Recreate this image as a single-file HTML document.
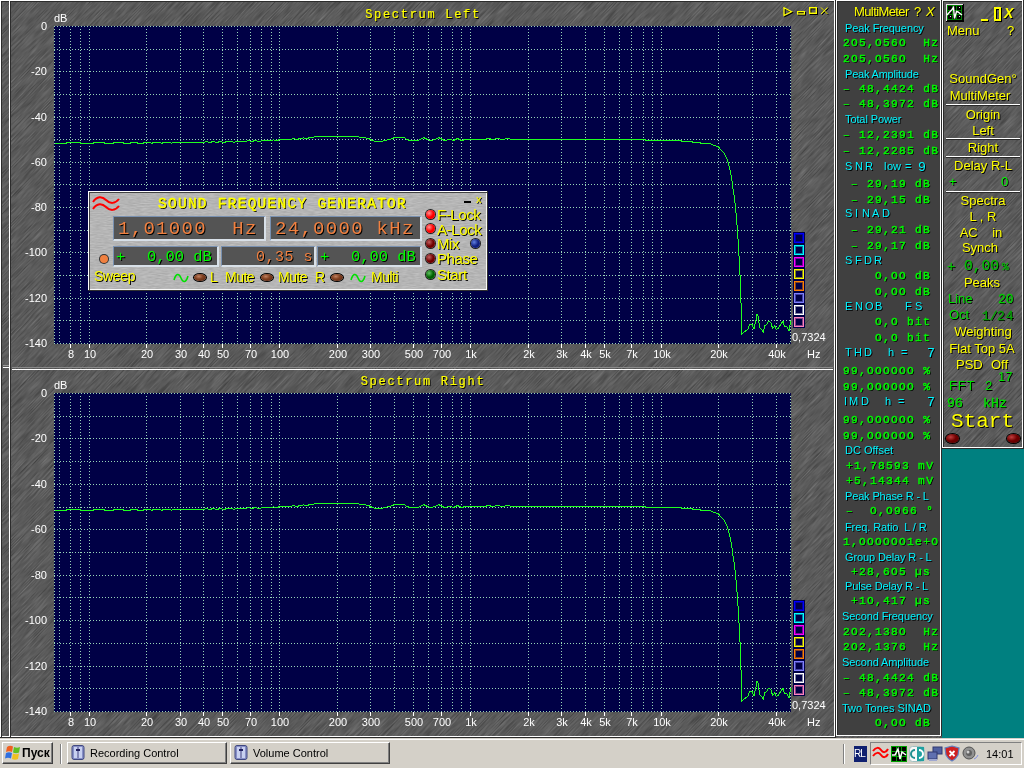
<!DOCTYPE html><html><head><meta charset="utf-8"><style>
*{margin:0;padding:0;box-sizing:border-box}
html,body{width:1024px;height:768px;overflow:hidden;background:#008080;position:relative}
body>div,body>svg{position:absolute}
.tex{background-color:#5f5f5f;
 background-image:
  repeating-linear-gradient(135deg, rgba(0,0,0,0) 0px, rgba(0,0,0,0) 17px, rgba(40,40,40,0.22) 18px, rgba(0,0,0,0) 19px),
  repeating-linear-gradient(135deg, rgba(0,0,0,0) 0px, rgba(0,0,0,0) 6px, rgba(70,70,70,0.18) 7px, rgba(0,0,0,0) 8px),
  repeating-linear-gradient(135deg, rgba(255,255,255,0) 0px, rgba(255,255,255,0) 4px, rgba(120,120,120,0.18) 5px, rgba(255,255,255,0) 6px);
}
.t{position:absolute;white-space:pre;font-family:"Liberation Sans",sans-serif;line-height:1;will-change:transform}
.s{font-family:"Liberation Sans",sans-serif;text-shadow:1px 1px 0 #000}
.m{font-family:"Liberation Mono",monospace;text-shadow:1px 1px 0 #000}
.ax{font-size:11px;color:#fff}
.mono{font-family:"Liberation Mono",monospace}
.cy{color:#00e8f0;font-size:11px;text-shadow:1px 1px 0 #000}
.gr{font-family:"Liberation Mono",monospace;color:#00ff00;font-size:13px;font-weight:bold;text-shadow:1px 1px 0 #000}
.ye{color:#ffff00;font-size:12px;text-shadow:1px 1px 0 #000}
</style></head><body><svg style="left:0;top:0" width="1024" height="738"><defs><filter id="tx" x="0" y="0" width="1" height="1" color-interpolation-filters="sRGB"><feTurbulence type="fractalNoise" baseFrequency="0.045 0.95" numOctaves="3" seed="11"/><feColorMatrix type="matrix" values="0.26 0 0 0 0.225  0.26 0 0 0 0.225  0.26 0 0 0 0.225  0 0 0 0 1"/></filter></defs><g transform="rotate(-46 512 369)"><rect x="-400" y="-500" width="1824" height="1738" filter="url(#tx)"/></g></svg><div style="left:942px;top:449px;width:82px;height:289px;background:#008080"></div><div style="position:absolute;left:0px;top:0px;width:836px;height:1px;background:#fff;"></div><div style="position:absolute;left:0px;top:1px;width:835px;height:1px;background:#2c2c2c;"></div><div style="position:absolute;left:0px;top:0px;width:1px;height:737px;background:#fff;"></div><div style="position:absolute;left:1px;top:1px;width:1px;height:736px;background:#2c2c2c;"></div><div style="position:absolute;left:9px;top:0px;width:1px;height:737px;background:#fff;"></div><div style="position:absolute;left:10px;top:1px;width:1px;height:736px;background:#2c2c2c;"></div><div style="position:absolute;left:834px;top:0px;width:1px;height:737px;background:#fff;"></div><div style="position:absolute;left:835px;top:0px;width:1px;height:738px;background:#2c2c2c;"></div><div style="position:absolute;left:2px;top:736px;width:7px;height:1px;background:#fff;"></div><div style="position:absolute;left:11px;top:736px;width:823px;height:1px;background:#fff;"></div><div style="position:absolute;left:0px;top:737px;width:836px;height:1px;background:#2c2c2c;"></div><div style="position:absolute;left:3px;top:365px;width:6px;height:1px;background:#9a9a9a;"></div><div style="position:absolute;left:3px;top:367px;width:6px;height:1px;background:#fff;"></div><div style="position:absolute;left:12px;top:367px;width:821px;height:1px;background:#8a8a8a;"></div><div style="position:absolute;left:12px;top:369px;width:821px;height:1px;background:#fff;"></div><svg style="left:54px;top:26px" width="738" height="318" viewBox="0 0 738 318" shape-rendering="crispEdges"><rect x="0" y="0" width="737" height="318" fill="#000046"/><line x1="0" y1="0.5" x2="737" y2="0.5" stroke="#98d4b8" stroke-width="1" stroke-dasharray="1 2"/><line x1="0" y1="23.5" x2="737" y2="23.5" stroke="#98d4b8" stroke-width="1" stroke-dasharray="1 2"/><line x1="0" y1="45.5" x2="737" y2="45.5" stroke="#98d4b8" stroke-width="1" stroke-dasharray="1 2"/><line x1="0" y1="68.5" x2="737" y2="68.5" stroke="#98d4b8" stroke-width="1" stroke-dasharray="1 2"/><line x1="0" y1="91.5" x2="737" y2="91.5" stroke="#98d4b8" stroke-width="1" stroke-dasharray="1 2"/><line x1="0" y1="113.5" x2="737" y2="113.5" stroke="#98d4b8" stroke-width="1" stroke-dasharray="1 2"/><line x1="0" y1="136.5" x2="737" y2="136.5" stroke="#98d4b8" stroke-width="1" stroke-dasharray="1 2"/><line x1="0" y1="158.5" x2="737" y2="158.5" stroke="#98d4b8" stroke-width="1" stroke-dasharray="1 2"/><line x1="0" y1="181.5" x2="737" y2="181.5" stroke="#98d4b8" stroke-width="1" stroke-dasharray="1 2"/><line x1="0" y1="204.5" x2="737" y2="204.5" stroke="#98d4b8" stroke-width="1" stroke-dasharray="1 2"/><line x1="0" y1="226.5" x2="737" y2="226.5" stroke="#98d4b8" stroke-width="1" stroke-dasharray="1 2"/><line x1="0" y1="249.5" x2="737" y2="249.5" stroke="#98d4b8" stroke-width="1" stroke-dasharray="1 2"/><line x1="0" y1="272.5" x2="737" y2="272.5" stroke="#98d4b8" stroke-width="1" stroke-dasharray="1 2"/><line x1="0" y1="294.5" x2="737" y2="294.5" stroke="#98d4b8" stroke-width="1" stroke-dasharray="1 2"/><line x1="0" y1="317.5" x2="737" y2="317.5" stroke="#98d4b8" stroke-width="1" stroke-dasharray="1 2"/><line x1="5.5" y1="3" x2="5.5" y2="317" stroke="#98d4b8" stroke-width="1" stroke-dasharray="1 2"/><line x1="16.5" y1="3" x2="16.5" y2="317" stroke="#98d4b8" stroke-width="1" stroke-dasharray="1 2"/><line x1="26.5" y1="3" x2="26.5" y2="317" stroke="#98d4b8" stroke-width="1" stroke-dasharray="1 2"/><line x1="35.5" y1="3" x2="35.5" y2="317" stroke="#98d4b8" stroke-width="1" stroke-dasharray="1 2"/><line x1="92.5" y1="3" x2="92.5" y2="317" stroke="#98d4b8" stroke-width="1" stroke-dasharray="1 2"/><line x1="126.5" y1="3" x2="126.5" y2="317" stroke="#98d4b8" stroke-width="1" stroke-dasharray="1 2"/><line x1="149.5" y1="3" x2="149.5" y2="317" stroke="#98d4b8" stroke-width="1" stroke-dasharray="1 2"/><line x1="168.5" y1="3" x2="168.5" y2="317" stroke="#98d4b8" stroke-width="1" stroke-dasharray="1 2"/><line x1="183.5" y1="3" x2="183.5" y2="317" stroke="#98d4b8" stroke-width="1" stroke-dasharray="1 2"/><line x1="196.5" y1="3" x2="196.5" y2="317" stroke="#98d4b8" stroke-width="1" stroke-dasharray="1 2"/><line x1="207.5" y1="3" x2="207.5" y2="317" stroke="#98d4b8" stroke-width="1" stroke-dasharray="1 2"/><line x1="217.5" y1="3" x2="217.5" y2="317" stroke="#98d4b8" stroke-width="1" stroke-dasharray="1 2"/><line x1="225.5" y1="3" x2="225.5" y2="317" stroke="#98d4b8" stroke-width="1" stroke-dasharray="1 2"/><line x1="283.5" y1="3" x2="283.5" y2="317" stroke="#98d4b8" stroke-width="1" stroke-dasharray="1 2"/><line x1="316.5" y1="3" x2="316.5" y2="317" stroke="#98d4b8" stroke-width="1" stroke-dasharray="1 2"/><line x1="340.5" y1="3" x2="340.5" y2="317" stroke="#98d4b8" stroke-width="1" stroke-dasharray="1 2"/><line x1="359.5" y1="3" x2="359.5" y2="317" stroke="#98d4b8" stroke-width="1" stroke-dasharray="1 2"/><line x1="374.5" y1="3" x2="374.5" y2="317" stroke="#98d4b8" stroke-width="1" stroke-dasharray="1 2"/><line x1="387.5" y1="3" x2="387.5" y2="317" stroke="#98d4b8" stroke-width="1" stroke-dasharray="1 2"/><line x1="398.5" y1="3" x2="398.5" y2="317" stroke="#98d4b8" stroke-width="1" stroke-dasharray="1 2"/><line x1="407.5" y1="3" x2="407.5" y2="317" stroke="#98d4b8" stroke-width="1" stroke-dasharray="1 2"/><line x1="416.5" y1="3" x2="416.5" y2="317" stroke="#98d4b8" stroke-width="1" stroke-dasharray="1 2"/><line x1="474.5" y1="3" x2="474.5" y2="317" stroke="#98d4b8" stroke-width="1" stroke-dasharray="1 2"/><line x1="507.5" y1="3" x2="507.5" y2="317" stroke="#98d4b8" stroke-width="1" stroke-dasharray="1 2"/><line x1="531.5" y1="3" x2="531.5" y2="317" stroke="#98d4b8" stroke-width="1" stroke-dasharray="1 2"/><line x1="550.5" y1="3" x2="550.5" y2="317" stroke="#98d4b8" stroke-width="1" stroke-dasharray="1 2"/><line x1="565.5" y1="3" x2="565.5" y2="317" stroke="#98d4b8" stroke-width="1" stroke-dasharray="1 2"/><line x1="577.5" y1="3" x2="577.5" y2="317" stroke="#98d4b8" stroke-width="1" stroke-dasharray="1 2"/><line x1="589.5" y1="3" x2="589.5" y2="317" stroke="#98d4b8" stroke-width="1" stroke-dasharray="1 2"/><line x1="598.5" y1="3" x2="598.5" y2="317" stroke="#98d4b8" stroke-width="1" stroke-dasharray="1 2"/><line x1="607.5" y1="3" x2="607.5" y2="317" stroke="#98d4b8" stroke-width="1" stroke-dasharray="1 2"/><line x1="664.5" y1="3" x2="664.5" y2="317" stroke="#98d4b8" stroke-width="1" stroke-dasharray="1 2"/><line x1="698.5" y1="3" x2="698.5" y2="317" stroke="#98d4b8" stroke-width="1" stroke-dasharray="1 2"/><line x1="722.5" y1="3" x2="722.5" y2="317" stroke="#98d4b8" stroke-width="1" stroke-dasharray="1 2"/><line x1="0.5" y1="3" x2="0.5" y2="317" stroke="#98d4b8" stroke-width="1" stroke-dasharray="1 2"/><line x1="736.5" y1="3" x2="736.5" y2="317" stroke="#98d4b8" stroke-width="1" stroke-dasharray="1 2"/><polyline points="0.5,117.5 12.5,117.5 12.5,116.5 26.5,116.5 26.5,117.5 39.5,117.5 39.5,116.5 50.5,116.5 50.5,117.5 59.5,117.5 59.5,116.5 69.5,116.5 69.5,117.5 76.5,117.5 76.5,116.5 83.5,116.5 83.5,117.5 89.5,117.5 89.5,116.5 96.5,116.5 97.5,117.5 99.5,116.5 106.5,116.5 107.5,117.5 109.5,116.5 116.5,116.5 117.5,117.5 118.5,116.5 149.5,116.5 152.5,115.5 155.5,116.5 159.5,115.5 162.5,116.5 166.5,115.5 169.5,116.5 173.5,115.5 180.5,116.1 183.5,115.5 191.5,115.5 194.5,114.5 197.5,115.5 201.5,114.5 204.5,115.5 209.5,114.5 216.5,114.5 219.5,114.0 222.5,114.5 226.5,113.5 236.5,113.5 239.5,112.5 242.5,113.5 246.5,112.5 249.5,112.0 252.5,112.5 256.5,111.5 263.5,110.5 301.5,110.5 308.5,111.5 314.5,112.5 318.5,114.5 321.5,115.5 326.5,115.5 331.5,114.5 338.5,112.5 340.5,111.5 350.5,111.5 352.5,113.5 356.5,114.5 363.5,114.5 366.5,113.5 369.5,111.5 373.5,113.5 376.5,114.5 381.5,113.5 384.5,111.5 388.5,113.5 390.5,114.5 396.5,113.5 399.5,114.5 403.5,112.5 407.5,114.5 411.5,113.5 416.5,113.5 421.5,113.5 424.5,113.5 430.5,113.5 434.5,112.5 438.5,113.5 443.5,112.5 448.5,113.5 453.5,112.5 458.5,113.5 591.5,113.5 591.5,114.5 627.5,114.5 627.5,115.5 638.5,115.5 638.5,116.5 646.5,116.5 646.5,117.5 656.5,117.5 658.1,118.5 660.5,119.5 664.1,120.5 666.3,123.1 669.7,126.5 671.4,130.0 673.1,133.4 674.4,136.9 675.7,142.9 677.0,148.9 678.3,156.6 679.1,163.5 680.4,171.2 682.0,187.1 683.5,204.5 684.7,224.0 685.9,245.1 686.8,271.5 687.7,296.0 688.0,308.0 689.1,306.9 694.0,303.1 695.6,298.7 697.8,298.2 698.9,300.4 700.0,303.1 701.1,297.1 702.2,293.2 703.0,288.1 704.1,290.0 704.9,296.5 706.0,302.0 707.7,303.6 709.3,305.8 710.9,299.8 712.6,298.7 714.2,295.4 716.9,296.5 718.6,302.5 720.8,299.8 722.4,303.6 724.1,302.5 729.0,294.9 730.6,300.9 732.8,300.4 735.0,305.3 736.6,295.5" fill="none" stroke="#20ff20" stroke-width="1" shape-rendering="crispEdges"/></svg><div class="t ax" style="right:977px;top:21px">0</div><div class="t ax" style="right:977px;top:66px">-20</div><div class="t ax" style="right:977px;top:112px">-40</div><div class="t ax" style="right:977px;top:157px">-60</div><div class="t ax" style="right:977px;top:202px">-80</div><div class="t ax" style="right:977px;top:247px">-100</div><div class="t ax" style="right:977px;top:293px">-120</div><div class="t ax" style="right:977px;top:338px">-140</div><div class="t ax" style="left:54px;top:13px">dB</div><div style="position:absolute;left:70px;top:344px;width:1px;height:4px;background:#fff;"></div><div class="t ax" style="left:41px;width:60px;text-align:center;top:349px">8</div><div style="position:absolute;left:89px;top:344px;width:1px;height:4px;background:#fff;"></div><div class="t ax" style="left:60px;width:60px;text-align:center;top:349px">10</div><div style="position:absolute;left:146px;top:344px;width:1px;height:4px;background:#fff;"></div><div class="t ax" style="left:117px;width:60px;text-align:center;top:349px">20</div><div style="position:absolute;left:180px;top:344px;width:1px;height:4px;background:#fff;"></div><div class="t ax" style="left:151px;width:60px;text-align:center;top:349px">30</div><div style="position:absolute;left:203px;top:344px;width:1px;height:4px;background:#fff;"></div><div class="t ax" style="left:174px;width:60px;text-align:center;top:349px">40</div><div style="position:absolute;left:222px;top:344px;width:1px;height:4px;background:#fff;"></div><div class="t ax" style="left:193px;width:60px;text-align:center;top:349px">50</div><div style="position:absolute;left:250px;top:344px;width:1px;height:4px;background:#fff;"></div><div class="t ax" style="left:221px;width:60px;text-align:center;top:349px">70</div><div style="position:absolute;left:279px;top:344px;width:1px;height:4px;background:#fff;"></div><div class="t ax" style="left:250px;width:60px;text-align:center;top:349px">100</div><div style="position:absolute;left:337px;top:344px;width:1px;height:4px;background:#fff;"></div><div class="t ax" style="left:308px;width:60px;text-align:center;top:349px">200</div><div style="position:absolute;left:370px;top:344px;width:1px;height:4px;background:#fff;"></div><div class="t ax" style="left:341px;width:60px;text-align:center;top:349px">300</div><div style="position:absolute;left:413px;top:344px;width:1px;height:4px;background:#fff;"></div><div class="t ax" style="left:384px;width:60px;text-align:center;top:349px">500</div><div style="position:absolute;left:441px;top:344px;width:1px;height:4px;background:#fff;"></div><div class="t ax" style="left:412px;width:60px;text-align:center;top:349px">700</div><div style="position:absolute;left:470px;top:344px;width:1px;height:4px;background:#fff;"></div><div class="t ax" style="left:441px;width:60px;text-align:center;top:349px">1k</div><div style="position:absolute;left:528px;top:344px;width:1px;height:4px;background:#fff;"></div><div class="t ax" style="left:499px;width:60px;text-align:center;top:349px">2k</div><div style="position:absolute;left:561px;top:344px;width:1px;height:4px;background:#fff;"></div><div class="t ax" style="left:532px;width:60px;text-align:center;top:349px">3k</div><div style="position:absolute;left:585px;top:344px;width:1px;height:4px;background:#fff;"></div><div class="t ax" style="left:556px;width:60px;text-align:center;top:349px">4k</div><div style="position:absolute;left:604px;top:344px;width:1px;height:4px;background:#fff;"></div><div class="t ax" style="left:575px;width:60px;text-align:center;top:349px">5k</div><div style="position:absolute;left:631px;top:344px;width:1px;height:4px;background:#fff;"></div><div class="t ax" style="left:602px;width:60px;text-align:center;top:349px">7k</div><div style="position:absolute;left:661px;top:344px;width:1px;height:4px;background:#fff;"></div><div class="t ax" style="left:632px;width:60px;text-align:center;top:349px">10k</div><div style="position:absolute;left:718px;top:344px;width:1px;height:4px;background:#fff;"></div><div class="t ax" style="left:689px;width:60px;text-align:center;top:349px">20k</div><div style="position:absolute;left:776px;top:344px;width:1px;height:4px;background:#fff;"></div><div class="t ax" style="left:747px;width:60px;text-align:center;top:349px">40k</div><div class="t ax" style="left:807px;top:349px">Hz</div><div class="t ax" style="left:792px;top:332px">0,7324</div><div class="t mono" style="left:0;width:846px;text-align:center;top:9.28px;font-size:12px;letter-spacing:1.7px;-webkit-text-stroke:0.2px #ffff00;color:#ffff00;text-shadow:1px 1px 0 #000">Spectrum Left</div><div style="position:absolute;left:793px;top:232px;width:12px;height:96px;background:#000046;"></div><div style="left:794px;top:233px;width:10px;height:10px;background:#000046;border:1px solid #0000ff;box-shadow:inset 0 0 0 1px #0000ff80"></div><div style="left:794px;top:245px;width:10px;height:10px;background:#000046;border:1px solid #00ffff;box-shadow:inset 0 0 0 1px #00ffff80"></div><div style="left:794px;top:257px;width:10px;height:10px;background:#000046;border:1px solid #ff00ff;box-shadow:inset 0 0 0 1px #ff00ff80"></div><div style="left:794px;top:269px;width:10px;height:10px;background:#000046;border:1px solid #ffff00;box-shadow:inset 0 0 0 1px #ffff0080"></div><div style="left:794px;top:281px;width:10px;height:10px;background:#000046;border:1px solid #ff8000;box-shadow:inset 0 0 0 1px #ff800080"></div><div style="left:794px;top:293px;width:10px;height:10px;background:#000046;border:1px solid #8080ff;box-shadow:inset 0 0 0 1px #8080ff80"></div><div style="left:794px;top:305px;width:10px;height:10px;background:#000046;border:1px solid #ffffff;box-shadow:inset 0 0 0 1px #ffffff80"></div><div style="left:794px;top:317px;width:10px;height:10px;background:#000046;border:1px solid #ff80c0;box-shadow:inset 0 0 0 1px #ff80c080"></div><svg style="left:782px;top:6px" width="50" height="14" viewBox="0 0 50 14"><polygon points="3,2.8 10.5,6.8 3,10.5" fill="none" stroke="#000" stroke-width="1.3" stroke-linejoin="miter"/><rect x="16.6" y="6.6" width="6.8" height="2.4" fill="none" stroke="#000" stroke-width="1.2"/><rect x="28.7" y="2.7" width="6.6" height="5.6" fill="none" stroke="#000" stroke-width="1.4"/><path d="M40,2.5 L46.5,9 M46.5,2.5 L40,9" stroke="#000" stroke-width="1"/><polygon points="2,1.8 9.5,5.8 2,9.5" fill="none" stroke="#ffff00" stroke-width="1.3" stroke-linejoin="miter"/><rect x="15.6" y="5.6" width="6.8" height="2.4" fill="none" stroke="#ffff00" stroke-width="1.2"/><rect x="27.7" y="1.7" width="6.6" height="5.6" fill="none" stroke="#ffff00" stroke-width="1.4"/><path d="M39,1.5 L45.5,8 M45.5,1.5 L39,8" stroke="#ffff00" stroke-width="1"/></svg><svg style="left:54px;top:393px" width="738" height="319" viewBox="0 0 738 319" shape-rendering="crispEdges"><rect x="0" y="0" width="737" height="319" fill="#000046"/><line x1="0" y1="0.5" x2="737" y2="0.5" stroke="#98d4b8" stroke-width="1" stroke-dasharray="1 2"/><line x1="0" y1="23.5" x2="737" y2="23.5" stroke="#98d4b8" stroke-width="1" stroke-dasharray="1 2"/><line x1="0" y1="45.5" x2="737" y2="45.5" stroke="#98d4b8" stroke-width="1" stroke-dasharray="1 2"/><line x1="0" y1="68.5" x2="737" y2="68.5" stroke="#98d4b8" stroke-width="1" stroke-dasharray="1 2"/><line x1="0" y1="91.5" x2="737" y2="91.5" stroke="#98d4b8" stroke-width="1" stroke-dasharray="1 2"/><line x1="0" y1="114.5" x2="737" y2="114.5" stroke="#98d4b8" stroke-width="1" stroke-dasharray="1 2"/><line x1="0" y1="136.5" x2="737" y2="136.5" stroke="#98d4b8" stroke-width="1" stroke-dasharray="1 2"/><line x1="0" y1="159.5" x2="737" y2="159.5" stroke="#98d4b8" stroke-width="1" stroke-dasharray="1 2"/><line x1="0" y1="182.5" x2="737" y2="182.5" stroke="#98d4b8" stroke-width="1" stroke-dasharray="1 2"/><line x1="0" y1="204.5" x2="737" y2="204.5" stroke="#98d4b8" stroke-width="1" stroke-dasharray="1 2"/><line x1="0" y1="227.5" x2="737" y2="227.5" stroke="#98d4b8" stroke-width="1" stroke-dasharray="1 2"/><line x1="0" y1="250.5" x2="737" y2="250.5" stroke="#98d4b8" stroke-width="1" stroke-dasharray="1 2"/><line x1="0" y1="273.5" x2="737" y2="273.5" stroke="#98d4b8" stroke-width="1" stroke-dasharray="1 2"/><line x1="0" y1="295.5" x2="737" y2="295.5" stroke="#98d4b8" stroke-width="1" stroke-dasharray="1 2"/><line x1="0" y1="318.5" x2="737" y2="318.5" stroke="#98d4b8" stroke-width="1" stroke-dasharray="1 2"/><line x1="5.5" y1="3" x2="5.5" y2="318" stroke="#98d4b8" stroke-width="1" stroke-dasharray="1 2"/><line x1="16.5" y1="3" x2="16.5" y2="318" stroke="#98d4b8" stroke-width="1" stroke-dasharray="1 2"/><line x1="26.5" y1="3" x2="26.5" y2="318" stroke="#98d4b8" stroke-width="1" stroke-dasharray="1 2"/><line x1="35.5" y1="3" x2="35.5" y2="318" stroke="#98d4b8" stroke-width="1" stroke-dasharray="1 2"/><line x1="92.5" y1="3" x2="92.5" y2="318" stroke="#98d4b8" stroke-width="1" stroke-dasharray="1 2"/><line x1="126.5" y1="3" x2="126.5" y2="318" stroke="#98d4b8" stroke-width="1" stroke-dasharray="1 2"/><line x1="149.5" y1="3" x2="149.5" y2="318" stroke="#98d4b8" stroke-width="1" stroke-dasharray="1 2"/><line x1="168.5" y1="3" x2="168.5" y2="318" stroke="#98d4b8" stroke-width="1" stroke-dasharray="1 2"/><line x1="183.5" y1="3" x2="183.5" y2="318" stroke="#98d4b8" stroke-width="1" stroke-dasharray="1 2"/><line x1="196.5" y1="3" x2="196.5" y2="318" stroke="#98d4b8" stroke-width="1" stroke-dasharray="1 2"/><line x1="207.5" y1="3" x2="207.5" y2="318" stroke="#98d4b8" stroke-width="1" stroke-dasharray="1 2"/><line x1="217.5" y1="3" x2="217.5" y2="318" stroke="#98d4b8" stroke-width="1" stroke-dasharray="1 2"/><line x1="225.5" y1="3" x2="225.5" y2="318" stroke="#98d4b8" stroke-width="1" stroke-dasharray="1 2"/><line x1="283.5" y1="3" x2="283.5" y2="318" stroke="#98d4b8" stroke-width="1" stroke-dasharray="1 2"/><line x1="316.5" y1="3" x2="316.5" y2="318" stroke="#98d4b8" stroke-width="1" stroke-dasharray="1 2"/><line x1="340.5" y1="3" x2="340.5" y2="318" stroke="#98d4b8" stroke-width="1" stroke-dasharray="1 2"/><line x1="359.5" y1="3" x2="359.5" y2="318" stroke="#98d4b8" stroke-width="1" stroke-dasharray="1 2"/><line x1="374.5" y1="3" x2="374.5" y2="318" stroke="#98d4b8" stroke-width="1" stroke-dasharray="1 2"/><line x1="387.5" y1="3" x2="387.5" y2="318" stroke="#98d4b8" stroke-width="1" stroke-dasharray="1 2"/><line x1="398.5" y1="3" x2="398.5" y2="318" stroke="#98d4b8" stroke-width="1" stroke-dasharray="1 2"/><line x1="407.5" y1="3" x2="407.5" y2="318" stroke="#98d4b8" stroke-width="1" stroke-dasharray="1 2"/><line x1="416.5" y1="3" x2="416.5" y2="318" stroke="#98d4b8" stroke-width="1" stroke-dasharray="1 2"/><line x1="474.5" y1="3" x2="474.5" y2="318" stroke="#98d4b8" stroke-width="1" stroke-dasharray="1 2"/><line x1="507.5" y1="3" x2="507.5" y2="318" stroke="#98d4b8" stroke-width="1" stroke-dasharray="1 2"/><line x1="531.5" y1="3" x2="531.5" y2="318" stroke="#98d4b8" stroke-width="1" stroke-dasharray="1 2"/><line x1="550.5" y1="3" x2="550.5" y2="318" stroke="#98d4b8" stroke-width="1" stroke-dasharray="1 2"/><line x1="565.5" y1="3" x2="565.5" y2="318" stroke="#98d4b8" stroke-width="1" stroke-dasharray="1 2"/><line x1="577.5" y1="3" x2="577.5" y2="318" stroke="#98d4b8" stroke-width="1" stroke-dasharray="1 2"/><line x1="589.5" y1="3" x2="589.5" y2="318" stroke="#98d4b8" stroke-width="1" stroke-dasharray="1 2"/><line x1="598.5" y1="3" x2="598.5" y2="318" stroke="#98d4b8" stroke-width="1" stroke-dasharray="1 2"/><line x1="607.5" y1="3" x2="607.5" y2="318" stroke="#98d4b8" stroke-width="1" stroke-dasharray="1 2"/><line x1="664.5" y1="3" x2="664.5" y2="318" stroke="#98d4b8" stroke-width="1" stroke-dasharray="1 2"/><line x1="698.5" y1="3" x2="698.5" y2="318" stroke="#98d4b8" stroke-width="1" stroke-dasharray="1 2"/><line x1="722.5" y1="3" x2="722.5" y2="318" stroke="#98d4b8" stroke-width="1" stroke-dasharray="1 2"/><line x1="0.5" y1="3" x2="0.5" y2="318" stroke="#98d4b8" stroke-width="1" stroke-dasharray="1 2"/><line x1="736.5" y1="3" x2="736.5" y2="318" stroke="#98d4b8" stroke-width="1" stroke-dasharray="1 2"/><polyline points="0.5,117.5 12.5,117.5 12.5,116.5 26.5,116.5 26.5,117.5 39.5,117.5 39.5,116.5 50.5,116.5 50.5,117.5 59.5,117.5 59.5,116.5 69.5,116.5 69.5,117.5 76.5,117.5 76.5,116.5 83.5,116.5 83.5,117.5 89.5,117.5 89.5,116.5 96.5,116.5 97.5,117.5 99.5,116.5 106.5,116.5 107.5,117.5 109.5,116.5 116.5,116.5 117.5,117.5 118.5,116.5 149.5,116.5 152.5,115.5 155.5,116.5 159.5,115.5 162.5,116.5 166.5,115.5 169.5,116.5 173.5,115.5 180.5,116.1 183.5,115.5 191.5,115.5 194.5,114.5 197.5,115.5 201.5,114.5 204.5,115.5 209.5,114.5 216.5,114.5 219.5,114.0 222.5,114.5 226.5,113.5 236.5,113.5 239.5,112.5 242.5,113.5 246.5,112.5 249.5,112.0 252.5,112.5 256.5,111.5 263.5,110.5 301.5,110.5 308.5,111.5 314.5,112.5 318.5,114.5 321.5,115.5 326.5,115.5 331.5,114.5 338.5,112.5 340.5,111.5 350.5,111.5 352.5,113.5 356.5,114.5 363.5,114.5 366.5,113.5 369.5,111.5 373.5,113.5 376.5,114.5 381.5,113.5 384.5,111.5 388.5,113.5 390.5,114.5 396.5,113.5 399.5,114.5 403.5,112.5 407.5,114.5 411.5,113.5 416.5,113.5 421.5,113.5 424.5,113.5 430.5,113.5 434.5,112.5 438.5,113.5 443.5,112.5 448.5,113.5 453.5,112.5 458.5,113.5 591.5,113.5 591.5,114.5 627.5,114.5 627.5,115.5 638.5,115.5 638.5,116.5 646.5,116.5 646.5,117.5 656.5,117.5 658.1,118.5 660.5,119.5 664.1,120.5 666.3,123.1 669.7,126.5 671.4,130.0 673.1,133.4 674.4,136.9 675.7,142.9 677.0,148.9 678.3,156.6 679.1,163.5 680.4,171.2 682.0,187.1 683.5,204.5 684.7,224.0 685.9,245.1 686.8,271.5 687.7,296.0 688.0,308.0 689.1,306.9 694.0,303.1 695.6,298.7 697.8,298.2 698.9,300.4 700.0,303.1 701.1,297.1 702.2,293.2 703.0,288.1 704.1,290.0 704.9,296.5 706.0,302.0 707.7,303.6 709.3,305.8 710.9,299.8 712.6,298.7 714.2,295.4 716.9,296.5 718.6,302.5 720.8,299.8 722.4,303.6 724.1,302.5 729.0,294.9 730.6,300.9 732.8,300.4 735.0,305.3 736.6,295.5" fill="none" stroke="#20ff20" stroke-width="1" shape-rendering="crispEdges"/></svg><div class="t ax" style="right:977px;top:388px">0</div><div class="t ax" style="right:977px;top:433px">-20</div><div class="t ax" style="right:977px;top:479px">-40</div><div class="t ax" style="right:977px;top:524px">-60</div><div class="t ax" style="right:977px;top:570px">-80</div><div class="t ax" style="right:977px;top:615px">-100</div><div class="t ax" style="right:977px;top:661px">-120</div><div class="t ax" style="right:977px;top:706px">-140</div><div class="t ax" style="left:54px;top:380px">dB</div><div style="position:absolute;left:70px;top:712px;width:1px;height:4px;background:#fff;"></div><div class="t ax" style="left:41px;width:60px;text-align:center;top:717px">8</div><div style="position:absolute;left:89px;top:712px;width:1px;height:4px;background:#fff;"></div><div class="t ax" style="left:60px;width:60px;text-align:center;top:717px">10</div><div style="position:absolute;left:146px;top:712px;width:1px;height:4px;background:#fff;"></div><div class="t ax" style="left:117px;width:60px;text-align:center;top:717px">20</div><div style="position:absolute;left:180px;top:712px;width:1px;height:4px;background:#fff;"></div><div class="t ax" style="left:151px;width:60px;text-align:center;top:717px">30</div><div style="position:absolute;left:203px;top:712px;width:1px;height:4px;background:#fff;"></div><div class="t ax" style="left:174px;width:60px;text-align:center;top:717px">40</div><div style="position:absolute;left:222px;top:712px;width:1px;height:4px;background:#fff;"></div><div class="t ax" style="left:193px;width:60px;text-align:center;top:717px">50</div><div style="position:absolute;left:250px;top:712px;width:1px;height:4px;background:#fff;"></div><div class="t ax" style="left:221px;width:60px;text-align:center;top:717px">70</div><div style="position:absolute;left:279px;top:712px;width:1px;height:4px;background:#fff;"></div><div class="t ax" style="left:250px;width:60px;text-align:center;top:717px">100</div><div style="position:absolute;left:337px;top:712px;width:1px;height:4px;background:#fff;"></div><div class="t ax" style="left:308px;width:60px;text-align:center;top:717px">200</div><div style="position:absolute;left:370px;top:712px;width:1px;height:4px;background:#fff;"></div><div class="t ax" style="left:341px;width:60px;text-align:center;top:717px">300</div><div style="position:absolute;left:413px;top:712px;width:1px;height:4px;background:#fff;"></div><div class="t ax" style="left:384px;width:60px;text-align:center;top:717px">500</div><div style="position:absolute;left:441px;top:712px;width:1px;height:4px;background:#fff;"></div><div class="t ax" style="left:412px;width:60px;text-align:center;top:717px">700</div><div style="position:absolute;left:470px;top:712px;width:1px;height:4px;background:#fff;"></div><div class="t ax" style="left:441px;width:60px;text-align:center;top:717px">1k</div><div style="position:absolute;left:528px;top:712px;width:1px;height:4px;background:#fff;"></div><div class="t ax" style="left:499px;width:60px;text-align:center;top:717px">2k</div><div style="position:absolute;left:561px;top:712px;width:1px;height:4px;background:#fff;"></div><div class="t ax" style="left:532px;width:60px;text-align:center;top:717px">3k</div><div style="position:absolute;left:585px;top:712px;width:1px;height:4px;background:#fff;"></div><div class="t ax" style="left:556px;width:60px;text-align:center;top:717px">4k</div><div style="position:absolute;left:604px;top:712px;width:1px;height:4px;background:#fff;"></div><div class="t ax" style="left:575px;width:60px;text-align:center;top:717px">5k</div><div style="position:absolute;left:631px;top:712px;width:1px;height:4px;background:#fff;"></div><div class="t ax" style="left:602px;width:60px;text-align:center;top:717px">7k</div><div style="position:absolute;left:661px;top:712px;width:1px;height:4px;background:#fff;"></div><div class="t ax" style="left:632px;width:60px;text-align:center;top:717px">10k</div><div style="position:absolute;left:718px;top:712px;width:1px;height:4px;background:#fff;"></div><div class="t ax" style="left:689px;width:60px;text-align:center;top:717px">20k</div><div style="position:absolute;left:776px;top:712px;width:1px;height:4px;background:#fff;"></div><div class="t ax" style="left:747px;width:60px;text-align:center;top:717px">40k</div><div class="t ax" style="left:807px;top:717px">Hz</div><div class="t ax" style="left:792px;top:700px">0,7324</div><div class="t mono" style="left:0;width:846px;text-align:center;top:376.28px;font-size:12px;letter-spacing:1.7px;-webkit-text-stroke:0.2px #ffff00;color:#ffff00;text-shadow:1px 1px 0 #000">Spectrum Right</div><div style="position:absolute;left:793px;top:600px;width:12px;height:96px;background:#000046;"></div><div style="left:794px;top:601px;width:10px;height:10px;background:#000046;border:1px solid #0000ff;box-shadow:inset 0 0 0 1px #0000ff80"></div><div style="left:794px;top:613px;width:10px;height:10px;background:#000046;border:1px solid #00ffff;box-shadow:inset 0 0 0 1px #00ffff80"></div><div style="left:794px;top:625px;width:10px;height:10px;background:#000046;border:1px solid #ff00ff;box-shadow:inset 0 0 0 1px #ff00ff80"></div><div style="left:794px;top:637px;width:10px;height:10px;background:#000046;border:1px solid #ffff00;box-shadow:inset 0 0 0 1px #ffff0080"></div><div style="left:794px;top:649px;width:10px;height:10px;background:#000046;border:1px solid #ff8000;box-shadow:inset 0 0 0 1px #ff800080"></div><div style="left:794px;top:661px;width:10px;height:10px;background:#000046;border:1px solid #8080ff;box-shadow:inset 0 0 0 1px #8080ff80"></div><div style="left:794px;top:673px;width:10px;height:10px;background:#000046;border:1px solid #ffffff;box-shadow:inset 0 0 0 1px #ffffff80"></div><div style="left:794px;top:685px;width:10px;height:10px;background:#000046;border:1px solid #ff80c0;box-shadow:inset 0 0 0 1px #ff80c080"></div><div style="position:absolute;left:836px;top:0px;width:1px;height:736px;background:#fff;"></div><div style="position:absolute;left:837px;top:1px;width:1px;height:735px;background:#2c2c2c;"></div><div style="position:absolute;left:836px;top:0px;width:106px;height:1px;background:#fff;"></div><div style="position:absolute;left:837px;top:1px;width:103px;height:1px;background:#2c2c2c;"></div><div style="position:absolute;left:838px;top:2px;width:102px;height:733px;background:#404040;"></div><div style="position:absolute;left:940px;top:0px;width:1px;height:736px;background:#fff;"></div><div style="position:absolute;left:941px;top:0px;width:1px;height:736px;background:#2c2c2c;"></div><div style="position:absolute;left:837px;top:735px;width:104px;height:1px;background:#fff;"></div><div style="position:absolute;left:942px;top:0px;width:82px;height:1px;background:#fff;"></div><div style="position:absolute;left:943px;top:1px;width:79px;height:1px;background:#2c2c2c;"></div><div style="position:absolute;left:942px;top:0px;width:1px;height:448px;background:#fff;"></div><div style="position:absolute;left:943px;top:1px;width:1px;height:447px;background:#2c2c2c;"></div><div style="position:absolute;left:1022px;top:0px;width:1px;height:448px;background:#fff;"></div><div style="position:absolute;left:1023px;top:0px;width:1px;height:449px;background:#2c2c2c;"></div><div style="position:absolute;left:943px;top:447px;width:80px;height:1px;background:#fff;"></div><div style="position:absolute;left:942px;top:448px;width:82px;height:1px;background:#2c2c2c;"></div><svg style="left:88px;top:191px" width="400" height="100" shape-rendering="crispEdges"><defs><filter id="brush" x="0" y="0" width="1" height="1" color-interpolation-filters="sRGB"><feTurbulence type="fractalNoise" baseFrequency="0.15 0.9" numOctaves="2" seed="5"/><feColorMatrix type="matrix" values="0.14 0 0 0 0.64  0.14 0 0 0 0.64  0.14 0 0 0 0.64  0 0 0 0 1"/></filter></defs><rect x="0" y="0" width="400" height="100" filter="url(#brush)"/><rect x="0" y="0" width="400" height="1" fill="#fff"/><rect x="0" y="0" width="1" height="100" fill="#fff"/><rect x="0" y="99" width="400" height="1" fill="#303030"/><rect x="399" y="0" width="1" height="100" fill="#303030"/><rect x="1" y="1" width="398" height="1" fill="#404040"/><rect x="1" y="1" width="1" height="98" fill="#404040"/><rect x="2" y="98" width="397" height="1" fill="#f8f8f8"/><rect x="398" y="2" width="1" height="97" fill="#f8f8f8"/></svg><svg style="left:92px;top:195px" width="30" height="20" viewBox="0 0 30 20"><path d="M1,7 C5,1 10,1 14,5 C18,9 23,9 27,4" fill="none" stroke="#ff0000" stroke-width="2"/><path d="M1,14 C5,8 10,8 14,12 C18,16 23,16 27,11" fill="none" stroke="#ff0000" stroke-width="2"/></svg><div class="t m" style="left:158px;top:197.48px;font-size:14.5px;letter-spacing:1.26px;font-weight:normal;-webkit-text-stroke:0.5px #ffff00;color:#ffff00;text-shadow:1px 1px 0 #000">SOUND FREQUENCY GENERATOR</div><div style="left:113px;top:216px;width:153px;height:25px;background:#545454;border-top:1px solid #7890b0;border-left:1px solid #7890b0;border-right:2px solid #d8e0e8;border-bottom:2px solid #d8e0e8"></div><div style="left:270px;top:216px;width:152px;height:25px;background:#545454;border-top:1px solid #7890b0;border-left:1px solid #7890b0;border-right:2px solid #d8e0e8;border-bottom:2px solid #d8e0e8"></div><div style="left:113px;top:246px;width:106px;height:21px;background:#545454;border-top:1px solid #7890b0;border-left:1px solid #7890b0;border-right:2px solid #d8e0e8;border-bottom:2px solid #d8e0e8"></div><div style="left:221px;top:246px;width:95px;height:21px;background:#545454;border-top:1px solid #7890b0;border-left:1px solid #7890b0;border-right:2px solid #d8e0e8;border-bottom:2px solid #d8e0e8"></div><div style="left:317px;top:246px;width:105px;height:21px;background:#545454;border-top:1px solid #7890b0;border-left:1px solid #7890b0;border-right:2px solid #d8e0e8;border-bottom:2px solid #d8e0e8"></div><div class="t m" style="left:118px;top:220.06px;font-size:19px;font-weight:normal;color:#f08040;text-shadow:1px 1px 0 #000;letter-spacing:1.3px">1,01000  Hz</div><div class="t m" style="left:275px;top:220.06px;font-size:19px;font-weight:normal;color:#f08040;text-shadow:1px 1px 0 #000;letter-spacing:1.3px">24,0000 kHz</div><div class="t m" style="left:116px;top:249.80px;font-size:15.4px;font-weight:normal;color:#00ff00;text-shadow:1px 1px 0 #000;">+</div><div class="t m" style="left:147px;top:249.80px;font-size:15.4px;font-weight:normal;color:#00ff00;text-shadow:1px 1px 0 #000;">0,00 dB</div><div class="t m" style="left:256px;top:250.10px;font-size:15px;font-weight:normal;color:#f08040;text-shadow:1px 1px 0 #000;letter-spacing:0.5px">0,35 s</div><div class="t m" style="left:320px;top:249.80px;font-size:15.4px;font-weight:normal;color:#00ff00;text-shadow:1px 1px 0 #000;">+</div><div class="t m" style="left:351px;top:249.80px;font-size:15.4px;font-weight:normal;color:#00ff00;text-shadow:1px 1px 0 #000;">0,00 dB</div><div style="left:100px;top:255px;width:8px;height:8px;border-radius:50%;background:#f08040;box-shadow:0 0 0 1px #303030"></div><div class="t s" style="left:94px;top:269.10px;font-size:14px;color:#ffff00;text-shadow:1px 1px 0 #000;letter-spacing:-0.3px">Sweep</div><svg style="left:173px;top:272px" width="16" height="12" viewBox="0 0 16 12"><path d="M1,8 C3,1 6,1 8,6 C10,11 13,11 15,4" fill="none" stroke="#00e000" stroke-width="1.6"/></svg><div style="left:194px;top:274px;width:12px;height:7px;border-radius:50%;background:radial-gradient(ellipse at 40% 35%,#c08060 0,#804020 40%,#502010 100%);box-shadow:0 0 0 1px #000"></div><div class="t s" style="left:210px;top:270.10px;font-size:14px;color:#ffff00;text-shadow:1px 1px 0 #000;">L</div><div class="t s" style="left:225px;top:270.10px;font-size:14px;color:#ffff00;text-shadow:1px 1px 0 #000;letter-spacing:-0.5px">Mute</div><div style="left:261px;top:274px;width:12px;height:7px;border-radius:50%;background:radial-gradient(ellipse at 40% 35%,#c08060 0,#804020 40%,#502010 100%);box-shadow:0 0 0 1px #000"></div><div class="t s" style="left:278px;top:270.10px;font-size:14px;color:#ffff00;text-shadow:1px 1px 0 #000;letter-spacing:-0.5px">Mute</div><div class="t s" style="left:315px;top:270.10px;font-size:14px;color:#ffff00;text-shadow:1px 1px 0 #000;">R</div><div style="left:331px;top:274px;width:12px;height:7px;border-radius:50%;background:radial-gradient(ellipse at 40% 35%,#c08060 0,#804020 40%,#502010 100%);box-shadow:0 0 0 1px #000"></div><svg style="left:350px;top:272px" width="16" height="12" viewBox="0 0 16 12"><path d="M1,8 C3,1 6,1 8,6 C10,11 13,11 15,4" fill="none" stroke="#00e000" stroke-width="1.6"/></svg><div class="t s" style="left:371px;top:270.10px;font-size:14px;color:#ffff00;text-shadow:1px 1px 0 #000;letter-spacing:-0.5px">Multi</div><div style="left:425.5px;top:209.5px;width:9px;height:9px;border-radius:50%;background:radial-gradient(circle at 35% 35%,#ff9090 0,#ff0000 50%);box-shadow:0 0 0 1px #202020"></div><div style="left:425.5px;top:224.1px;width:9px;height:9px;border-radius:50%;background:radial-gradient(circle at 35% 35%,#ff9090 0,#ff0000 50%);box-shadow:0 0 0 1px #202020"></div><div style="left:425.5px;top:239.0px;width:9px;height:9px;border-radius:50%;background:radial-gradient(circle at 35% 35%,#c06060 0,#700000 50%);box-shadow:0 0 0 1px #202020"></div><div style="left:425.5px;top:253.89999999999998px;width:9px;height:9px;border-radius:50%;background:radial-gradient(circle at 35% 35%,#c06060 0,#700000 50%);box-shadow:0 0 0 1px #202020"></div><div style="left:425.5px;top:270.2px;width:9px;height:9px;border-radius:50%;background:radial-gradient(circle at 35% 35%,#60c060 0,#006000 50%);box-shadow:0 0 0 1px #202020"></div><div style="left:470.5px;top:239.0px;width:9px;height:9px;border-radius:50%;background:radial-gradient(circle at 35% 35%,#6080e0 0,#102080 50%);box-shadow:0 0 0 1px #202020"></div><div class="t s" style="left:437px;top:207.05px;font-size:15px;color:#ffff00;text-shadow:1px 1px 0 #000;letter-spacing:-0.4px">F-Lock</div><div class="t s" style="left:437px;top:221.65px;font-size:15px;color:#ffff00;text-shadow:1px 1px 0 #000;letter-spacing:-0.4px">A-Lock</div><div class="t s" style="left:437px;top:236.45px;font-size:15px;color:#ffff00;text-shadow:1px 1px 0 #000;letter-spacing:-0.4px">Mix</div><div class="t s" style="left:437px;top:251.35px;font-size:15px;color:#ffff00;text-shadow:1px 1px 0 #000;letter-spacing:-0.4px">Phase</div><div class="t s" style="left:437px;top:266.85px;font-size:15px;color:#ffff00;text-shadow:1px 1px 0 #000;letter-spacing:-0.4px">Start</div><div style="position:absolute;left:464px;top:201px;width:7px;height:2px;background:#000;"></div><div class="t s" style="left:476px;top:194.15px;font-size:11px;color:#ffff00;text-shadow:1px 1px 0 #000;">x</div><div class="t s" style="left:854.0px;top:4.95px;font-size:13px;color:#ffff00;letter-spacing:-0.6px">MultiMeter</div><div class="t s" style="left:914.2px;top:4.95px;font-size:13px;color:#ffff00;">?</div><div class="t s" style="left:926.2px;top:4.95px;font-size:13px;color:#ffff00;font-style:italic">X</div><div class="t s" style="left:845.2px;top:22.55px;font-size:11px;color:#00f4ff;letter-spacing:-0.1px">Peak Frequency</div><div class="t m" style="left:842.5px;top:37.79px;font-size:11.2px;letter-spacing:1.300px;font-weight:normal;-webkit-text-stroke:0.45px #00f800;color:#00f800;">2O5,O56O  Hz</div><div class="t m" style="left:842.5px;top:53.79px;font-size:11.2px;letter-spacing:1.300px;font-weight:normal;-webkit-text-stroke:0.45px #00f800;color:#00f800;">2O5,O56O  Hz</div><div class="t s" style="left:845.2px;top:68.65px;font-size:11px;color:#00f4ff;letter-spacing:-0.2px">Peak Amplitude</div><div class="t m" style="left:842.5px;top:84.29px;font-size:11.2px;letter-spacing:1.300px;font-weight:normal;-webkit-text-stroke:0.45px #00f800;color:#00f800;">– 48,4424 dB</div><div class="t m" style="left:842.5px;top:99.49px;font-size:11.2px;letter-spacing:1.300px;font-weight:normal;-webkit-text-stroke:0.45px #00f800;color:#00f800;">– 48,3972 dB</div><div class="t s" style="left:845.2px;top:114.15px;font-size:11px;color:#00f4ff;letter-spacing:-0.1px">Total Power</div><div class="t m" style="left:842.5px;top:130.09px;font-size:11.2px;letter-spacing:1.300px;font-weight:normal;-webkit-text-stroke:0.45px #00f800;color:#00f800;">– 12,2391 dB</div><div class="t m" style="left:842.5px;top:145.74px;font-size:11.2px;letter-spacing:1.300px;font-weight:normal;-webkit-text-stroke:0.45px #00f800;color:#00f800;">– 12,2285 dB</div><div class="t m" style="left:850.5px;top:179.09px;font-size:11.2px;letter-spacing:1.300px;font-weight:normal;-webkit-text-stroke:0.45px #00f800;color:#00f800;">– 29,19 dB</div><div class="t m" style="left:850.5px;top:195.09px;font-size:11.2px;letter-spacing:1.300px;font-weight:normal;-webkit-text-stroke:0.45px #00f800;color:#00f800;">– 29,15 dB</div><div class="t m" style="left:850.5px;top:225.09px;font-size:11.2px;letter-spacing:1.300px;font-weight:normal;-webkit-text-stroke:0.45px #00f800;color:#00f800;">– 29,21 dB</div><div class="t m" style="left:850.5px;top:241.09px;font-size:11.2px;letter-spacing:1.300px;font-weight:normal;-webkit-text-stroke:0.45px #00f800;color:#00f800;">– 29,17 dB</div><div class="t m" style="left:874.5px;top:270.99px;font-size:11.2px;letter-spacing:1.300px;font-weight:normal;-webkit-text-stroke:0.45px #00f800;color:#00f800;">O,OO dB</div><div class="t m" style="left:874.5px;top:287.19px;font-size:11.2px;letter-spacing:1.300px;font-weight:normal;-webkit-text-stroke:0.45px #00f800;color:#00f800;">O,OO dB</div><div class="t m" style="left:874.5px;top:317.29px;font-size:11.2px;letter-spacing:1.300px;font-weight:normal;-webkit-text-stroke:0.45px #00f800;color:#00f800;">O,O bit</div><div class="t m" style="left:874.5px;top:332.99px;font-size:11.2px;letter-spacing:1.300px;font-weight:normal;-webkit-text-stroke:0.45px #00f800;color:#00f800;">O,O bit</div><div class="t m" style="left:842.5px;top:365.59px;font-size:11.2px;letter-spacing:1.300px;font-weight:normal;-webkit-text-stroke:0.45px #00f800;color:#00f800;">99,OOOOOO %</div><div class="t m" style="left:842.5px;top:381.89px;font-size:11.2px;letter-spacing:1.300px;font-weight:normal;-webkit-text-stroke:0.45px #00f800;color:#00f800;">99,OOOOOO %</div><div class="t m" style="left:842.5px;top:414.69px;font-size:11.2px;letter-spacing:1.300px;font-weight:normal;-webkit-text-stroke:0.45px #00f800;color:#00f800;">99,OOOOOO %</div><div class="t m" style="left:842.5px;top:430.89px;font-size:11.2px;letter-spacing:1.300px;font-weight:normal;-webkit-text-stroke:0.45px #00f800;color:#00f800;">99,OOOOOO %</div><div class="t s" style="left:845.2px;top:445.25px;font-size:11px;color:#00f4ff;letter-spacing:0px">DC Offset</div><div class="t m" style="left:845.5px;top:460.79px;font-size:11.2px;letter-spacing:1.300px;font-weight:normal;-webkit-text-stroke:0.45px #00f800;color:#00f800;">+1,78593 mV</div><div class="t m" style="left:845.5px;top:476.49px;font-size:11.2px;letter-spacing:1.300px;font-weight:normal;-webkit-text-stroke:0.45px #00f800;color:#00f800;">+5,14344 mV</div><div class="t s" style="left:845.2px;top:491.05px;font-size:11px;color:#00f4ff;letter-spacing:-0.15px">Peak Phase R - L</div><div class="t m" style="left:845.5px;top:505.74px;font-size:11.2px;letter-spacing:1.300px;font-weight:normal;-webkit-text-stroke:0.45px #00f800;color:#00f800;">–  O,O966 °</div><div class="t s" style="left:845.2px;top:521.85px;font-size:11px;color:#00f4ff;letter-spacing:-0.1px">Freq. Ratio  L / R</div><div class="t m" style="left:842.5px;top:537.19px;font-size:11.2px;letter-spacing:1.300px;font-weight:normal;-webkit-text-stroke:0.45px #00f800;color:#00f800;">1,OOOOOO1e+O</div><div class="t s" style="left:845.2px;top:551.75px;font-size:11px;color:#00f4ff;letter-spacing:-0.12px">Group Delay R - L</div><div class="t m" style="left:850.5px;top:567.09px;font-size:11.2px;letter-spacing:1.300px;font-weight:normal;-webkit-text-stroke:0.45px #00f800;color:#00f800;">+28,6O5 µs</div><div class="t s" style="left:845.2px;top:581.35px;font-size:11px;color:#00f4ff;letter-spacing:-0.15px">Pulse Delay R - L</div><div class="t m" style="left:850.5px;top:596.39px;font-size:11.2px;letter-spacing:1.300px;font-weight:normal;-webkit-text-stroke:0.45px #00f800;color:#00f800;">+1O,417 µs</div><div class="t s" style="left:842.2px;top:611.15px;font-size:11px;color:#00f4ff;letter-spacing:-0.1px">Second Frequency</div><div class="t m" style="left:842.5px;top:627.19px;font-size:11.2px;letter-spacing:1.300px;font-weight:normal;-webkit-text-stroke:0.45px #00f800;color:#00f800;">2O2,138O  Hz</div><div class="t m" style="left:842.5px;top:642.49px;font-size:11.2px;letter-spacing:1.300px;font-weight:normal;-webkit-text-stroke:0.45px #00f800;color:#00f800;">2O2,1376  Hz</div><div class="t s" style="left:842.2px;top:657.40px;font-size:11px;color:#00f4ff;letter-spacing:-0.1px">Second Amplitude</div><div class="t m" style="left:842.5px;top:672.69px;font-size:11.2px;letter-spacing:1.300px;font-weight:normal;-webkit-text-stroke:0.45px #00f800;color:#00f800;">– 48,4424 dB</div><div class="t m" style="left:842.5px;top:688.39px;font-size:11.2px;letter-spacing:1.300px;font-weight:normal;-webkit-text-stroke:0.45px #00f800;color:#00f800;">– 48,3972 dB</div><div class="t s" style="left:842.2px;top:703.25px;font-size:11px;color:#00f4ff;letter-spacing:0px">Two Tones SINAD</div><div class="t m" style="left:874.5px;top:718.09px;font-size:11.2px;letter-spacing:1.300px;font-weight:normal;-webkit-text-stroke:0.45px #00f800;color:#00f800;">O,OO dB</div><div class="t s" style="left:845.2px;top:160.85px;font-size:11px;color:#00f4ff;">S</div><div class="t s" style="left:854.7px;top:160.85px;font-size:11px;color:#00f4ff;">N</div><div class="t s" style="left:864.7px;top:160.85px;font-size:11px;color:#00f4ff;">R</div><div class="t s" style="left:884.2px;top:160.85px;font-size:11px;color:#00f4ff;">l</div><div class="t s" style="left:886.7px;top:160.85px;font-size:11px;color:#00f4ff;">o</div><div class="t s" style="left:893.2px;top:160.85px;font-size:11px;color:#00f4ff;">w</div><div class="t s" style="left:904.7px;top:160.85px;font-size:11px;color:#00f4ff;">=</div><div class="t m" style="left:917.5px;top:160.67px;font-size:13.2px;font-weight:normal;color:#00f4ff;">9</div><div class="t s" style="left:845.2px;top:208.35px;font-size:11px;color:#00f4ff;">S</div><div class="t s" style="left:855.2px;top:208.35px;font-size:11px;color:#00f4ff;">I</div><div class="t s" style="left:862.2px;top:208.35px;font-size:11px;color:#00f4ff;">N</div><div class="t s" style="left:872.2px;top:208.35px;font-size:11px;color:#00f4ff;">A</div><div class="t s" style="left:882.2px;top:208.35px;font-size:11px;color:#00f4ff;">D</div><div class="t s" style="left:845.2px;top:254.75px;font-size:11px;color:#00f4ff;">S</div><div class="t s" style="left:855.2px;top:254.75px;font-size:11px;color:#00f4ff;">F</div><div class="t s" style="left:864.2px;top:254.75px;font-size:11px;color:#00f4ff;">D</div><div class="t s" style="left:874.2px;top:254.75px;font-size:11px;color:#00f4ff;">R</div><div class="t s" style="left:845.2px;top:300.65px;font-size:11px;color:#00f4ff;">E</div><div class="t s" style="left:855.2px;top:300.65px;font-size:11px;color:#00f4ff;">N</div><div class="t s" style="left:865.2px;top:300.65px;font-size:11px;color:#00f4ff;">O</div><div class="t s" style="left:875.2px;top:300.65px;font-size:11px;color:#00f4ff;">B</div><div class="t s" style="left:905.2px;top:300.65px;font-size:11px;color:#00f4ff;">F</div><div class="t s" style="left:915.2px;top:300.65px;font-size:11px;color:#00f4ff;">S</div><div class="t s" style="left:845.2px;top:347.35px;font-size:11px;color:#00f4ff;">T</div><div class="t s" style="left:854.2px;top:347.35px;font-size:11px;color:#00f4ff;">H</div><div class="t s" style="left:864.2px;top:347.35px;font-size:11px;color:#00f4ff;">D</div><div class="t s" style="left:888.2px;top:347.35px;font-size:11px;color:#00f4ff;">h</div><div class="t s" style="left:901.2px;top:347.35px;font-size:11px;color:#00f4ff;">=</div><div class="t m" style="left:926.5px;top:347.17px;font-size:13.2px;font-weight:normal;color:#00f4ff;">7</div><div class="t s" style="left:844.2px;top:396.45px;font-size:11px;color:#00f4ff;">I</div><div class="t s" style="left:849.2px;top:396.45px;font-size:11px;color:#00f4ff;">M</div><div class="t s" style="left:861.2px;top:396.45px;font-size:11px;color:#00f4ff;">D</div><div class="t s" style="left:885.2px;top:396.45px;font-size:11px;color:#00f4ff;">h</div><div class="t s" style="left:898.2px;top:396.45px;font-size:11px;color:#00f4ff;">=</div><div class="t m" style="left:926.5px;top:396.27px;font-size:13.2px;font-weight:normal;color:#00f4ff;">7</div><svg style="left:946px;top:4px" width="18" height="18" viewBox="0 0 18 18" shape-rendering="crispEdges"><rect x="0" y="0" width="18" height="18" fill="#000"/><rect x="0" y="0" width="17" height="1" fill="#f0e0f0"/><rect x="0" y="0" width="1" height="17" fill="#f0e0f0"/><rect x="1" y="1" width="15" height="15" fill="#008000"/><rect x="2" y="2" width="4" height="4" fill="#000"/><rect x="7" y="2" width="3" height="4" fill="#000"/><rect x="11" y="2" width="4" height="4" fill="#000"/><rect x="2" y="7" width="4" height="3" fill="#000"/><rect x="7" y="7" width="3" height="3" fill="#000"/><rect x="11" y="7" width="4" height="3" fill="#000"/><rect x="2" y="11" width="4" height="4" fill="#000"/><rect x="7" y="11" width="3" height="4" fill="#000"/><rect x="11" y="11" width="4" height="4" fill="#000"/><rect x="4" y="12" width="1" height="1" fill="#f0d0f0"/><rect x="13" y="12" width="1" height="1" fill="#f0d0f0"/><rect x="13" y="3" width="1" height="1" fill="#f0d0f0"/><polyline points="1,11 6,5.5 7.5,3.5 8.5,14.5 10.5,7.5 12,8 16,11" fill="none" stroke="#fff" stroke-width="1.4" shape-rendering="auto"/></svg><div style="position:absolute;left:981px;top:19px;width:7px;height:2px;background:#ffff00;box-shadow:1px 1px 0 #000"></div><div style="left:994px;top:7px;width:7px;height:14px;border:2px solid #ff0;box-shadow:1px 1px 0 #000, inset 1px 1px 0 #000"></div><div class="t s" style="left:1004.2px;top:5.60px;font-size:14px;color:#ffff00;font-style:italic;font-weight:bold">X</div><div class="t s" style="left:947.2px;top:24.15px;font-size:13px;color:#ffff00;">Menu</div><div class="t s" style="left:1007.2px;top:24.15px;font-size:13px;color:#ffff00;">?</div><div class="t s" style="left:932.5px;width:100px;text-align:center;top:72.25px;font-size:13px;color:#ffff00;">SoundGen°</div><div class="t s" style="left:930px;width:100px;text-align:center;top:88.75px;font-size:13px;color:#ffff00;">MultiMeter</div><div style="position:absolute;left:946px;top:104px;width:74px;height:1px;background:#fff;"></div><div style="position:absolute;left:946px;top:105px;width:74px;height:1px;background:#2a2a2a;"></div><div style="position:absolute;left:946px;top:138px;width:74px;height:1px;background:#fff;"></div><div style="position:absolute;left:946px;top:139px;width:74px;height:1px;background:#2a2a2a;"></div><div style="position:absolute;left:946px;top:156px;width:74px;height:1px;background:#fff;"></div><div style="position:absolute;left:946px;top:157px;width:74px;height:1px;background:#2a2a2a;"></div><div style="position:absolute;left:946px;top:191px;width:74px;height:1px;background:#fff;"></div><div style="position:absolute;left:946px;top:192px;width:74px;height:1px;background:#2a2a2a;"></div><div class="t s" style="left:932.5px;width:100px;text-align:center;top:107.55px;font-size:13px;color:#ffff00;">Origin</div><div class="t s" style="left:932.5px;width:100px;text-align:center;top:123.85px;font-size:13px;color:#ffff00;">Left</div><div class="t s" style="left:932.5px;width:100px;text-align:center;top:141.45px;font-size:13px;color:#ffff00;">Right</div><div class="t s" style="left:932.5px;width:100px;text-align:center;top:159.45px;font-size:13px;color:#ffff00;">Delay R-L</div><div class="t s" style="left:949.2px;top:175.45px;font-size:13px;color:#00f800;">+</div><div class="t s" style="left:1001.2px;top:175.45px;font-size:13px;color:#00f800;">0</div><div class="t s" style="left:932.5px;width:100px;text-align:center;top:194.35px;font-size:13px;color:#ffff00;">Spectra</div><div class="t s" style="left:932.5px;width:100px;text-align:center;top:209.95px;font-size:13px;color:#ffff00;">L , R</div><div class="t s" style="left:931px;width:100px;text-align:center;top:225.95px;font-size:13px;color:#ffff00;">AC&nbsp;&nbsp;&nbsp;&nbsp;in</div><div class="t s" style="left:929.5px;width:100px;text-align:center;top:241.25px;font-size:13px;color:#ffff00;">Synch</div><div class="t m" style="left:946.5px;top:259.66px;font-size:14px;font-weight:normal;color:#00c000;-webkit-text-stroke:0.2px #00c000">+</div><div class="t m" style="left:963.5px;top:259.20px;font-size:14.6px;font-weight:normal;color:#00c000;-webkit-text-stroke:0.2px #00c000">0,00</div><div class="t m" style="left:1001.5px;top:261.94px;font-size:11px;font-weight:normal;color:#00c000;-webkit-text-stroke:0.3px #00c000">%</div><div class="t s" style="left:931.5px;width:100px;text-align:center;top:275.85px;font-size:13px;color:#ffff00;">Peaks</div><div class="t s" style="left:948.2px;top:291.55px;font-size:13px;color:#00e000;">Line</div><div class="t m" style="left:997.5px;top:293.22px;font-size:13px;font-weight:normal;color:#00d000;font-size:13px;-webkit-text-stroke:0.3px #00d000">20</div><div class="t s" style="left:949.2px;top:308.45px;font-size:13px;color:#00e000;">Oct</div><div class="t m" style="left:981.5px;top:310.12px;font-size:13px;font-weight:normal;color:#00a000;-webkit-text-stroke:0.3px #00a000">1/</div><div class="t m" style="left:996.5px;top:310.12px;font-size:13px;font-weight:normal;color:#00a000;letter-spacing:1px;-webkit-text-stroke:0.3px #00a000">24</div><div class="t s" style="left:932.5px;width:100px;text-align:center;top:325.35px;font-size:13px;color:#ffff00;">Weighting</div><div class="t s" style="left:931.5px;width:100px;text-align:center;top:341.65px;font-size:13px;color:#ffff00;">Flat Top 5A</div><div class="t s" style="left:956.2px;top:357.85px;font-size:13px;color:#ffff00;">PSD</div><div class="t s" style="left:991.2px;top:357.85px;font-size:13px;color:#ffff00;">Off</div><div class="t s" style="left:949.2px;top:378.65px;font-size:13px;color:#00e000;letter-spacing:0.8px">FFT</div><div class="t s" style="left:984.7px;top:378.65px;font-size:13px;color:#00e000;">2</div><div class="t s" style="left:997.7px;top:370.20px;font-size:13px;color:#00e000;">17</div><div class="t m" style="left:946.5px;top:397.07px;font-size:13.2px;font-weight:normal;color:#00e000;-webkit-text-stroke:0.3px #00e000">96</div><div class="t m" style="left:982.5px;top:397.07px;font-size:13.2px;font-weight:normal;color:#00e000;-webkit-text-stroke:0.3px #00e000">kHz</div><div class="t m" style="left:950.5px;top:411.34px;font-size:21px;font-weight:normal;color:#ffff00;">Start</div><div style="left:946.0px;top:434px;width:13px;height:9px;border-radius:50%;background:radial-gradient(ellipse at 35% 35%,#c04040 0,#700000 45%,#500000 100%);box-shadow:0 0 0 1px #000"></div><div style="left:1007.0px;top:434px;width:13px;height:9px;border-radius:50%;background:radial-gradient(ellipse at 35% 35%,#c04040 0,#700000 45%,#500000 100%);box-shadow:0 0 0 1px #000"></div><div style="position:absolute;left:0px;top:738px;width:1024px;height:30px;background:#d4d0c8;"></div><div style="position:absolute;left:0px;top:739px;width:1024px;height:1px;background:#ffffff;"></div><div style="left:2px;top:742px;width:51px;height:22px;background:#d4d0c8;border-top:1px solid #fff;border-left:1px solid #fff;border-right:1px solid #404040;border-bottom:1px solid #404040;box-shadow:inset -1px -1px 0 #808080"></div><svg style="left:5px;top:745px" width="16" height="15" viewBox="0 0 16 15"><path d="M2,2 Q5,0 8,1.5 L7,7 Q4,5.5 1,7 Z" fill="#f06020"/><path d="M9,2 Q12,3.5 15,2 L14,7.5 Q11,9 8,7.5 Z" fill="#60c020"/><path d="M1,8 Q4,6.5 7,8 L6,13.5 Q3,12 0,13.5 Z" fill="#3070e0"/><path d="M8,8.5 Q11,10 14,8.5 L13,14 Q10,15.5 7,14 Z" fill="#f0c020"/></svg><div class="t" style="left:22px;top:747px;font-size:12px;font-weight:bold;color:#000;letter-spacing:0px">Пуск</div><div style="position:absolute;left:60px;top:744px;width:1px;height:20px;background:#808080;"></div><div style="position:absolute;left:61px;top:744px;width:1px;height:20px;background:#fff;"></div><div style="left:67px;top:742px;width:160px;height:22px;background:#d4d0c8;border-top:1px solid #fff;border-left:1px solid #fff;border-right:1px solid #404040;border-bottom:1px solid #404040;box-shadow:inset -1px -1px 0 #808080"></div><svg style="left:71px;top:745px" width="15" height="16" viewBox="0 0 15 16"><rect x="1" y="0.5" width="12" height="14" rx="2" fill="#8890c8" stroke="#404880"/><rect x="3" y="2" width="8" height="11" fill="#c8d0f0"/><rect x="6.5" y="2" width="1" height="11" fill="#404080"/><rect x="5" y="4" width="4" height="2" fill="#202060"/></svg><div class="t" style="left:90px;top:748px;font-size:11px;color:#000">Recording Control</div><div style="left:230px;top:742px;width:160px;height:22px;background:#d4d0c8;border-top:1px solid #fff;border-left:1px solid #fff;border-right:1px solid #404040;border-bottom:1px solid #404040;box-shadow:inset -1px -1px 0 #808080"></div><svg style="left:234px;top:745px" width="15" height="16" viewBox="0 0 15 16"><rect x="1" y="0.5" width="12" height="14" rx="2" fill="#8890c8" stroke="#404880"/><rect x="3" y="2" width="8" height="11" fill="#c8d0f0"/><rect x="6.5" y="2" width="1" height="11" fill="#404080"/><rect x="5" y="4" width="4" height="2" fill="#202060"/></svg><div class="t" style="left:253px;top:748px;font-size:11px;color:#000">Volume Control</div><div style="position:absolute;left:843px;top:744px;width:1px;height:20px;background:#808080;"></div><div style="position:absolute;left:844px;top:744px;width:1px;height:20px;background:#fff;"></div><div style="left:854px;top:746px;width:13px;height:16px;background:#102070"></div><div class="t" style="left:854px;top:749px;font-size:10px;color:#fff;letter-spacing:-1px">RL</div><div style="left:870px;top:742px;width:152px;height:23px;border-top:1px solid #808080;border-left:1px solid #808080;border-right:1px solid #fff;border-bottom:1px solid #fff"></div><svg style="left:872px;top:746px" width="17" height="14" viewBox="0 0 17 14"><path d="M1,5 C4,1 7,1 9,4 C11,7 14,7 16,3" fill="none" stroke="#ff0000" stroke-width="2"/><path d="M1,10 C4,6 7,6 9,9 C11,12 14,12 16,8" fill="none" stroke="#ff0000" stroke-width="2"/></svg><svg style="left:891px;top:746px" width="16" height="16" viewBox="0 0 16 16" shape-rendering="crispEdges"><rect width="16" height="16" fill="#000"/><rect x="0" y="0" width="16" height="1" fill="#00a000"/><rect x="0" y="15" width="16" height="1" fill="#00a000"/><rect x="0" y="0" width="1" height="16" fill="#00a000"/><rect x="15" y="0" width="1" height="16" fill="#00a000"/><rect x="5" y="0" width="1" height="16" fill="#00a000"/><rect x="10" y="0" width="1" height="16" fill="#00a000"/><rect x="0" y="5" width="16" height="1" fill="#00a000"/><rect x="0" y="10" width="16" height="1" fill="#00a000"/><polyline points="1,9 4,9 7,3 9,13 11,6 15,9" fill="none" stroke="#fff" stroke-width="1.5" shape-rendering="auto"/></svg><svg style="left:909px;top:746px" width="16" height="16" viewBox="0 0 16 16"><rect x="0.5" y="0.5" width="15" height="15" rx="3" fill="#f8f8f8" stroke="#a0c0c0"/><rect x="8" y="1" width="7" height="14" fill="#20a0a0"/><path d="M6,4 A4,4 0 0 0 6,12" fill="none" stroke="#209090" stroke-width="2"/><path d="M10,4 A4,4 0 0 1 10,12" fill="none" stroke="#fff" stroke-width="2"/></svg><svg style="left:927px;top:746px" width="16" height="16" viewBox="0 0 16 16"><rect x="6" y="1" width="9" height="7" fill="#5060a0" stroke="#303870"/><rect x="1" y="6" width="9" height="7" fill="#6070b0" stroke="#303870"/><rect x="2" y="13" width="8" height="2" fill="#a0a8d0"/></svg><svg style="left:944px;top:745px" width="16" height="17" viewBox="0 0 16 17"><path d="M8,1 L15,3 L14,10 Q12,14 8,16 Q4,14 2,10 L1,3 Z" fill="#d02020" stroke="#6080c0" stroke-width="1.2"/><path d="M5.5,6 L10.5,11 M10.5,6 L5.5,11" stroke="#fff" stroke-width="1.8"/></svg><svg style="left:962px;top:746px" width="18" height="16" viewBox="0 0 18 16"><circle cx="7" cy="7" r="6" fill="#909090" stroke="#505050"/><circle cx="7" cy="7" r="3" fill="#606060"/><circle cx="6" cy="6" r="1.5" fill="#d0d0d0"/><path d="M12,13 Q15,12 16,9" fill="none" stroke="#8090e0" stroke-width="1"/></svg><div class="t" style="left:986px;top:749px;font-size:11px;color:#000">14:01</div></body></html>
